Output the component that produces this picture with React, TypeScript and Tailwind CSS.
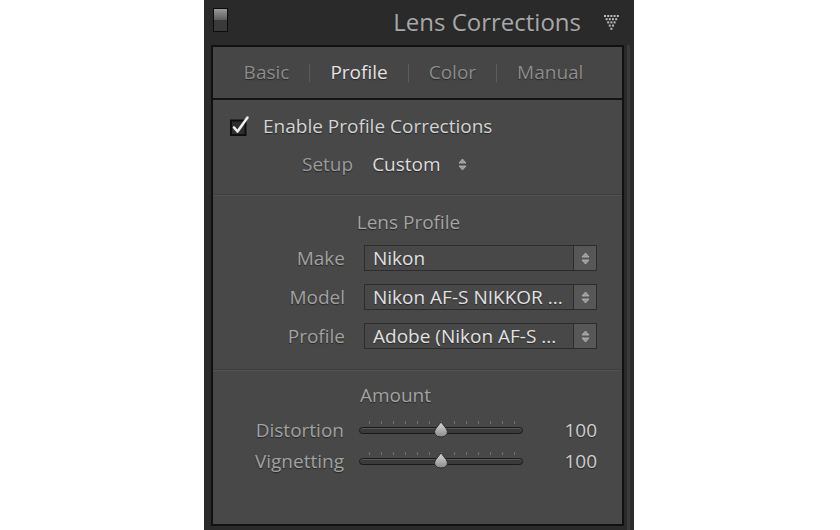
import React from 'react';

const UpDown = () => (
  <svg width="9" height="13" viewBox="0 0 9 13">
    <path d="M4.5 1 L8 5 L1 5 Z" fill="#9a9a9a" stroke="#b8b8b8" strokeWidth="0.8" />
    <path d="M4.5 12 L8 8 L1 8 Z" fill="#9a9a9a" stroke="#b8b8b8" strokeWidth="0.8" />
  </svg>
);

const Dropdown: React.FC<{ label: string; value: string }> = ({ label, value }) => (
  <div className="flex items-center h-[26px]">
    <div className="w-[132px] text-right text-[#a2a2a2]">{label}</div>
    <div className="ml-[19px] flex h-[26px] w-[233px] border border-[#2c2c2c] bg-[#484848]">
      <div className="flex-1 pl-[8px] leading-[24px] text-[#e2e2e2] whitespace-nowrap overflow-hidden">{value}</div>
      <div className="w-[23px] border-l border-[#2c2c2c] bg-[#575757] flex items-center justify-center">
        <UpDown />
      </div>
    </div>
  </div>
);

const Slider: React.FC<{ label: string; value: string }> = ({ label, value }) => {
  const ticks = Array.from({ length: 13 }, (_, i) => i);
  return (
    <div className="flex items-center h-[24px]">
      <div className="w-[131px] text-right text-[#a2a2a2]">{label}</div>
      <div className="ml-[15px] relative w-[164px] h-[24px]">
        <div className="absolute left-[10px] right-[8px] top-[3px] flex justify-between">
          {ticks.map(t => (
            <div key={t} className="w-px h-[3px] bg-[#707070]" />
          ))}
        </div>
        <div className="absolute left-0 right-0 top-[9px] h-[7px] rounded-full border border-[#1a1a1a] bg-[#3a3a3a] shadow-[inset_0_1px_0_#575757]" />
        <svg className="absolute left-[74px] top-[3px]" width="16" height="17" viewBox="0 0 16 17">
          <defs>
            <linearGradient id="th" x1="0" y1="0" x2="0" y2="1">
              <stop offset="0" stopColor="#dadada" />
              <stop offset="1" stopColor="#8a8a8a" />
            </linearGradient>
          </defs>
          <path d="M8 1 L13.5 8 Q15 10.5 14 13 Q12.5 16 8 16 Q3.5 16 2 13 Q1 10.5 2.5 8 Z" fill="url(#th)" stroke="#262626" strokeWidth="0.9" />
        </svg>
      </div>
      <div className="ml-auto mr-[25px] text-[#cfcfcf]">{value}</div>
    </div>
  );
};

const Divider = () => (
  <div>
    <div className="h-px bg-[#3d3d3d]" />
    <div className="h-px bg-[#525252]" />
  </div>
);

export default function App() {
  return (
    <div className="w-[840px] h-[530px] bg-white flex font-['Open_Sans',sans-serif] text-[19px] [text-shadow:0_1px_1px_#262626]">
      <div className="ml-[204px] w-[430px] h-[530px] bg-[#2a2a2a] flex flex-col">
        {/* header */}
        <div className="h-[45px] flex items-start relative">
          <div className="mt-[8px] ml-[9px] w-[15px] h-[24px] border border-[#0c0c0c] flex flex-col">
            <div className="flex-1 bg-gradient-to-b from-[#9a9a9a] to-[#5c5c5c]" />
            <div className="flex-1 bg-[#3a3a3a]" />
          </div>
          <div className="ml-auto mt-[6px] text-[24px] leading-[32px] text-[#a8a8a8]">Lens Corrections</div>
          <svg className="ml-[22px] mr-[14px] mt-[14px]" width="17" height="17" viewBox="0 0 17 17">
            {[0, 1, 2, 3, 4].map(r =>
              Array.from({ length: 5 - r }, (_, i) => (
                <rect key={`${r}-${i}`} x={1 + r * 1.6 + i * 3.2} y={1 + r * 3.2} width="2" height="2" fill="#bdbdbd" />
              ))
            )}
          </svg>
        </div>

        {/* inner panel */}
        <div className="ml-[7px] mr-[4px] flex-1 flex">
          <div className="flex-1 border-2 border-[#111] mb-[4px] bg-[#484848] flex flex-col">
            {/* tabs */}
            <div className="h-[53px] bg-[#464646] border-b-2 border-[#141414] flex items-center justify-center gap-[20px] pr-[8px] text-[19px]">
              <span className="text-[#8c8c8c]">Basic</span>
              <span className="w-px h-[18px] bg-[#5c5c5c]" />
              <span className="text-[#e4e4e4]">Profile</span>
              <span className="w-px h-[18px] bg-[#5c5c5c]" />
              <span className="text-[#8c8c8c]">Color</span>
              <span className="w-px h-[18px] bg-[#5c5c5c]" />
              <span className="text-[#8c8c8c]">Manual</span>
            </div>

            {/* section 1 */}
            <div className="pt-[13px] pb-[17px]">
              <div className="flex items-center h-[26px]">
                <svg className="ml-[16px]" width="22" height="22" viewBox="0 0 22 22">
                  <rect x="2" y="5.5" width="14.5" height="14.5" fill="#2e2e2e" stroke="#0e0e0e" strokeWidth="2" />
                  <path d="M5 12.5 L8.5 16.5 L18.5 2.5" fill="none" stroke="#eeeeee" strokeWidth="2.6" strokeLinecap="round" strokeLinejoin="round" />
                </svg>
                <span className="ml-[12px] text-[#d4d4d4]">Enable Profile Corrections</span>
              </div>
              <div className="flex items-center h-[26px] mt-[12px]">
                <span className="ml-[89px] text-[#9c9c9c]">Setup</span>
                <span className="ml-[19px] text-[#dcdcdc]">Custom</span>
                <span className="ml-[17px] flex items-center"><UpDown /></span>
              </div>
            </div>

            <Divider />

            {/* section 2 */}
            <div className="pt-[14px] pb-[20px]">
              <div className="h-[24px] flex items-center justify-center pr-[18px] text-[#a4a4a4]">Lens Profile</div>
              <div className="mt-[11px] flex flex-col gap-[13px]">
                <Dropdown label="Make" value="Nikon" />
                <Dropdown label="Model" value="Nikon AF-S NIKKOR ..." />
                <Dropdown label="Profile" value="Adobe (Nikon AF-S ..." />
              </div>
            </div>

            <Divider />

            {/* section 3 */}
            <div className="pt-[12px]">
              <div className="h-[24px] flex items-center justify-center pr-[44px] text-[#a4a4a4]">Amount</div>
              <div className="mt-[11px] flex flex-col gap-[7px]">
                <Slider label="Distortion" value="100" />
                <Slider label="Vignetting" value="100" />
              </div>
            </div>
          </div>
          <div className="w-[6px] flex">
            <div className="ml-[3px] w-[3px] bg-[#3a3a3a]" />
          </div>
        </div>
      </div>
    </div>
  );
}
